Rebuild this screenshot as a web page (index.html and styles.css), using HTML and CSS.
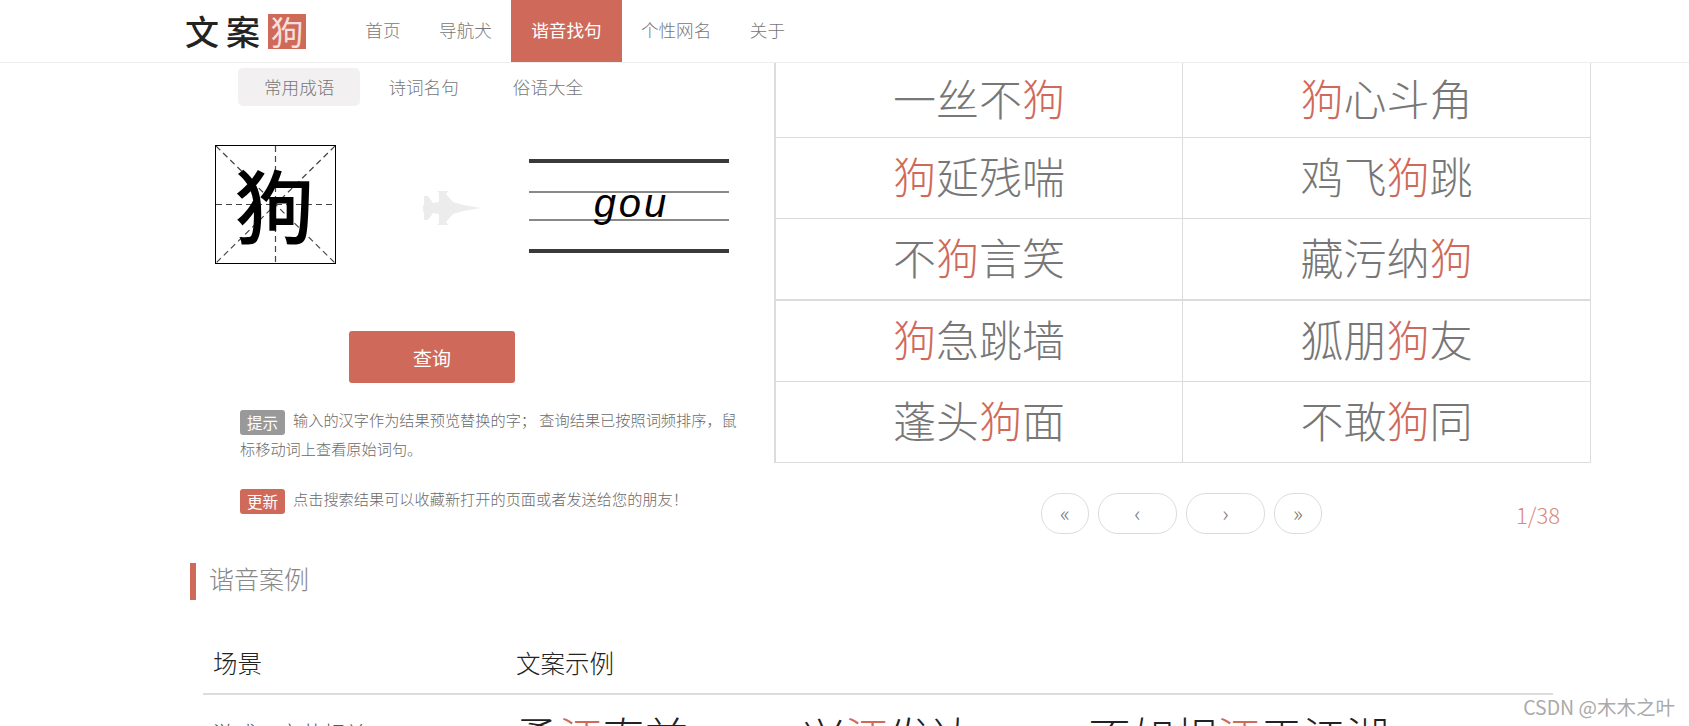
FILE: index.html
```html
<!DOCTYPE html>
<html lang="zh-CN">
<head>
  <meta charset="UTF-8">
  <title>文案狗 - 谐音找句</title>
  <link rel="stylesheet" href="styles.css">
</head>
<body>
  <!-- Top nav -->
  <header class="site-header">
    <a class="logo"><span class="logo-text">文案</span><span class="logo-mark">狗</span></a>
    <nav class="nav">
      <a class="nav-item">首页</a>
      <a class="nav-item">导航犬</a>
      <a class="nav-item active">谐音找句</a>
      <a class="nav-item">个性网名</a>
      <a class="nav-item">关于</a>
    </nav>
  </header>

  <main class="search">
    <!-- Search form -->
    <section class="panel">
      <div class="tabs">
        <a class="tab active">常用成语</a>
        <a class="tab">诗词名句</a>
        <a class="tab">俗语大全</a>
      </div>

      <div class="convert">
        <div class="tian">
          <svg class="tian-grid" viewBox="0 0 119 117" preserveAspectRatio="none">
            <path d="M0 0L119 117M119 0L0 117M59.500 0V117M0 58.500H119" stroke="#444" stroke-width="1.200" stroke-dasharray="6 4" fill="none"/>
          </svg>
          <span class="tian-char">狗</span>
        </div>
        <svg class="plane" viewBox="0 0 58 34">
          <path d="M58 17L40 14L30 11L23 3L25 0H14L16 2V11L10 12L5 5H1V13L0 15V20L1 21V29H5L10 22L16 23V32L14 34H25L23 31L30 23L40 20Z" fill="#ececec"/>
        </svg>
        <div class="pinyin"><span>gou</span></div>
      </div>

      <button class="query-btn">查询</button>

      <p class="note"><span class="badge">提示</span>输入的汉字作为结果预览替换的字； 查询结果已按照词频排序，鼠标移动词上查看原始词句。</p>
      <p class="note note-update"><span class="badge badge-red">更新</span>点击搜索结果可以收藏新打开的页面或者发送给您的朋友！</p>
    </section>

    <!-- Results -->
    <section class="results">
      <div class="result-table">
        <div class="cell">一丝不<em>狗</em></div>
        <div class="cell"><em>狗</em>心斗角</div>
        <div class="cell"><em>狗</em>延残喘</div>
        <div class="cell">鸡飞<em>狗</em>跳</div>
        <div class="cell">不<em>狗</em>言笑</div>
        <div class="cell">藏污纳<em>狗</em></div>
        <div class="cell thick"><em>狗</em>急跳墙</div>
        <div class="cell thick">狐朋<em>狗</em>友</div>
        <div class="cell">蓬头<em>狗</em>面</div>
        <div class="cell">不敢<em>狗</em>同</div>
      </div>
      <div class="pager">
        <a class="page-btn">«</a>
        <a class="page-btn wide">‹</a>
        <a class="page-btn wide">›</a>
        <a class="page-btn">»</a>
        <span class="page-count">1/38</span>
      </div>
    </section>
  </main>

  <!-- Examples -->
  <section class="cases">
    <h2 class="section-title">谐音案例</h2>
    <div class="case-table">
      <div class="case-head">
        <span class="col-scene">场景</span>
        <span>文案示例</span>
      </div>
      <div class="case-row">
        <span class="col-scene scene-name">游戏、文艺相关</span>
        <span class="phrases">
          <span class="phrase">勇<em>汪</em>直前</span>
          <span class="phrase">兴<em>汪</em>发达</span>
          <span class="phrase">不如相<em>汪</em>于江湖</span>
        </span>
      </div>
    </div>
  </section>

  <div class="watermark">CSDN @木木之叶</div>
</body>
</html>
```

FILE: styles.css
```css
:root {
  --red: #cf6a5b;
  --line: #dcdcdc;
  --text: #777;
}

html {
  overflow: hidden;
}

body {
  margin: 0;
  height: 726px;
  overflow: hidden;
  position: relative;
  background: #fff;
  color: var(--text);
  font-family: "Noto Sans CJK SC", "Noto Sans", sans-serif;
}

em {
  font-style: normal;
  color: var(--red);
}

/* Header */
.site-header {
  display: flex;
  height: 62px;
  padding-left: 185px;
  border-bottom: 1px solid #eee;
}

.logo {
  display: flex;
  align-items: center;
  width: 326px;
}

.logo-text {
  font-size: 34px;
  font-weight: 500;
  line-height: 1;
  color: #222;
  letter-spacing: 7px;
  margin-right: 1px;
}

.logo-mark {
  width: 38px;
  height: 35px;
  background: var(--red);
  color: #f6dfda;
  font-size: 33px;
  line-height: 34px;
  text-align: center;
}

.nav {
  display: flex;
  margin-left: -165px;
}

.nav-item {
  padding: 0 19.3px;
  font-size: 17.6px;
  font-weight: 300;
  line-height: 60px;
  white-space: nowrap;
}

.nav-item.active {
  padding: 0 20px;
  background: var(--red);
  color: #fff;
  font-weight: 400;
}

/* Main two columns */
.search {
  display: grid;
  grid-template-columns: 774px 817px;
}

.panel {
  padding-top: 5px;
}

.tabs {
  display: flex;
  gap: 2px;
  margin-left: 238px;
}

.tab {
  padding: 0 26px;
  font-size: 17.6px;
  font-weight: 300;
  line-height: 38px;
  border-radius: 5px;
}

.tab.active {
  background: #f2f0f1;
}

.convert {
  display: flex;
  align-items: flex-start;
  margin: 39px 0 0 215px;
}

.tian {
  position: relative;
  width: 121px;
  height: 119px;
  box-sizing: border-box;
  border: 1px solid #000;
}

.tian-grid {
  display: block;
  width: 100%;
  height: 100%;
}

.tian-char {
  position: absolute;
  inset: 0 2px 0 0;
  font-weight: 500;
  font-size: 80px;
  line-height: 112px;
  text-align: center;
  color: #000;
}

.plane {
  width: 58px;
  height: 34px;
  margin: 46px 48px 0 87px;
}

.pinyin {
  width: 200px;
  margin-top: 14px;
  padding: 28px 0;
  border-top: 4px solid #3a3a3a;
  border-bottom: 4px solid #3a3a3a;
}

.pinyin span {
  display: block;
  height: 26px;
  padding-left: 5px;
  border-top: 2px solid #888;
  border-bottom: 2px solid #888;
  font-family: "Liberation Sans", sans-serif;
  font-style: italic;
  font-size: 40px;
  line-height: 20px;
  letter-spacing: 3px;
  text-align: center;
  color: #000;
}

.query-btn {
  display: block;
  width: 166px;
  height: 52px;
  margin: 67px 0 0 349px;
  border: none;
  border-radius: 3px;
  background: var(--red);
  color: #fff;
  font-family: inherit;
  font-size: 19px;
}

.note {
  width: 497px;
  margin: 23px 0 0 240px;
  font-size: 15.2px;
  font-weight: 300;
  line-height: 26px;
  color: #6a6a6a;
}

.note-update {
  margin-top: 24px;
}

.badge {
  display: inline-block;
  width: 45px;
  height: 25px;
  margin-right: 8px;
  border-radius: 3px;
  background: #999;
  color: #fff;
  font-size: 15.5px;
  font-weight: 400;
  line-height: 25px;
  text-align: center;
  vertical-align: -3px;
}

.badge-red {
  background: var(--red);
}

/* Result grid */
.result-table {
  display: grid;
  grid-template-columns: 407px 407px;
  grid-template-rows: 75px 81px 81px 82px 81px;
  border-left: 2px solid var(--line);
  border-right: 1px solid var(--line);
}

.cell {
  display: flex;
  align-items: center;
  justify-content: center;
  box-sizing: border-box;
  padding-bottom: 6px;
  border-bottom: 1px solid var(--line);
  font-size: 43px;
  font-weight: 300;
  color: var(--text);
}

.cell:nth-child(odd) {
  border-right: 1px solid var(--line);
}

.cell.thick {
  border-top: 1px solid var(--line);
}

.pager {
  display: flex;
  align-items: center;
  gap: 9px;
  margin: 30px 0 0 267px;
}

.page-btn {
  width: 46px;
  height: 39px;
  border: 1px solid var(--line);
  border-radius: 20px;
  font-size: 22px;
  font-weight: 300;
  line-height: 36px;
  text-align: center;
}

.page-btn.wide {
  width: 77px;
}

.page-count {
  margin-left: 185px;
  font-size: 22px;
  font-weight: 300;
  color: #d9897d;
}

/* Examples */
.cases {
  position: absolute;
  top: 563px;
  left: 190px;
  right: 136px;
}

.section-title {
  height: 37px;
  margin: 0;
  padding-left: 13px;
  border-left: 6px solid var(--red);
  font-size: 25px;
  font-weight: 300;
  line-height: 31px;
  color: #888;
}

.case-table {
  margin: 45px 0 0 13px;
}

.case-head {
  display: flex;
  height: 48px;
  border-bottom: 2px solid var(--line);
  font-size: 24.5px;
  font-weight: 300;
  line-height: 36px;
  color: #222;
}

.col-scene {
  width: 313px;
  padding-left: 10px;
  box-sizing: border-box;
}

.case-row {
  display: flex;
  align-items: flex-start;
  padding-top: 10px;
}

.scene-name {
  padding-top: 12px;
  font-size: 22px;
  font-weight: 300;
  line-height: 30px;
  color: #556;
}

.phrases {
  display: flex;
  font-size: 43px;
  font-weight: 300;
  line-height: 60px;
  color: #222;
  white-space: nowrap;
}

.phrase {
  width: 286px;
}

/* Screenshot watermark */
.watermark {
  position: absolute;
  right: 14px;
  top: 692px;
  font-size: 19.5px;
  color: #aaa;
}
```
